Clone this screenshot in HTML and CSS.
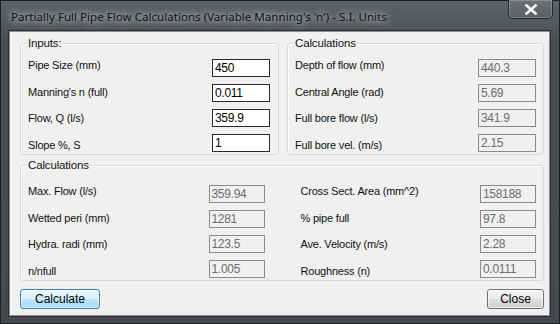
FILE: index.html
```html
<!DOCTYPE html>
<html>
<head>
<meta charset="utf-8">
<link rel="stylesheet" href="styles.css">
</head>
<body>
<div class="window">
  <div class="titlebar">
    <span class="title">Partially Full Pipe Flow Calculations (Variable Manning's 'n') - S.I. Units</span>
    <div class="close-btn">
      <svg width="14" height="11" viewBox="0 0 14 11"><path d="M2.5 1.5 L11.5 9.5 M11.5 1.5 L2.5 9.5" stroke="#ffffff" stroke-width="2.6" stroke-linecap="square"/></svg>
    </div>
  </div>
  <div class="client">
    <div class="top-row">
      <fieldset class="group g-inputs">
        <legend>Inputs:</legend>
        <div class="cols">
          <div class="labels">
            <span>Pipe Size (mm)</span>
            <span>Manning's n (full)</span>
            <span>Flow, Q (l/s)</span>
            <span>Slope %, S</span>
          </div>
          <div class="fields">
            <div class="box edit">450</div>
            <div class="box edit">0.011</div>
            <div class="box edit">359.9</div>
            <div class="box edit">1</div>
          </div>
        </div>
      </fieldset>
      <fieldset class="group g-calc1">
        <legend>Calculations</legend>
        <div class="cols">
          <div class="labels">
            <span>Depth of flow (mm)</span>
            <span>Central Angle (rad)</span>
            <span>Full bore flow (l/s)</span>
            <span>Full bore vel. (m/s)</span>
          </div>
          <div class="fields">
            <div class="box ro">440.3</div>
            <div class="box ro">5.69</div>
            <div class="box ro">341.9</div>
            <div class="box ro">2.15</div>
          </div>
        </div>
      </fieldset>
    </div>
    <fieldset class="group g-calc2">
      <legend>Calculations</legend>
      <div class="cols2">
        <div class="cols half-l">
          <div class="labels">
            <span>Max. Flow (l/s)</span>
            <span>Wetted peri (mm)</span>
            <span>Hydra. radi (mm)</span>
            <span>n/nfull</span>
          </div>
          <div class="fields">
            <div class="box ro narrow">359.94</div>
            <div class="box ro narrow">1281</div>
            <div class="box ro narrow">123.5</div>
            <div class="box ro narrow">1.005</div>
          </div>
        </div>
        <div class="cols half-r">
          <div class="labels">
            <span>Cross Sect. Area (mm^2)</span>
            <span>% pipe full</span>
            <span>Ave. Velocity (m/s)</span>
            <span>Roughness (n)</span>
          </div>
          <div class="fields">
            <div class="box ro narrow">158188</div>
            <div class="box ro narrow">97.8</div>
            <div class="box ro narrow">2.28</div>
            <div class="box ro narrow">0.0111</div>
          </div>
        </div>
      </div>
    </fieldset>
    <div class="buttons">
      <div class="btn default">Calculate</div>
      <div class="btn close">Close</div>
    </div>
  </div>
</div>
</body>
</html>
```

FILE: styles.css
```css
html, body {
  margin: 0;
  padding: 0;
}
body {
  width: 560px;
  height: 324px;
  overflow: hidden;
  background: #3a3e44;
  font-family: "Liberation Sans", Arial, sans-serif;
}
.window {
  width: 560px;
  height: 324px;
  display: flex;
  flex-direction: column;
  box-sizing: border-box;
  border: 1px solid #1c1f24;
  background: linear-gradient(180deg, #5f6369 0px, #565a60 20px, #4b4f55 40px, #45494f 100%);
}
.titlebar {
  height: 30px;
  display: flex;
  align-items: flex-start;
  justify-content: space-between;
  padding-left: 10px;
  padding-right: 6px;
}
.title {
  margin-top: 8px;
  font-family: "Noto Sans", "DejaVu Sans", sans-serif;
  font-size: 11.6px;
  line-height: 15px;
  color: #111;
  text-shadow: 0 0 6px rgba(230, 233, 238, 0.9), 0 0 10px rgba(200, 204, 210, 0.8);
  white-space: nowrap;
}
.close-btn {
  width: 45px;
  height: 19px;
  margin-top: -1px;
  box-sizing: border-box;
  border: 1px solid #25282d;
  border-top: none;
  border-radius: 0 0 5px 5px;
  background: linear-gradient(180deg, #6c7077, #5b5f65);
  box-shadow: inset 0 0 0 1px rgba(255,255,255,0.22);
  display: flex;
  align-items: center;
  justify-content: center;
}
.client {
  margin: 0 9px 7px 8px;
  flex: 1;
  background: #f0f0f0;
  border: 1px solid #8d9196;
  box-shadow: 0 0 0 1px #2a2d33;
  padding: 4px 5px 0 10px;
  box-sizing: border-box;
  font-size: 11px;
  color: #000;
}
.top-row {
  display: flex;
  gap: 8px;
}
.group {
  margin: 0;
  border: 1px solid #d5d8dc;
  border-radius: 3px;
  box-shadow: inset 1px 1px 0 #fff;
  padding: 0;
  min-width: 0;
}
.group legend {
  font-size: 11.5px;
  line-height: 14px;
  padding: 0 1px;
  margin-left: -1px;
  letter-spacing: -0.15px;
  color: #111;
}
.g-inputs {
  width: 259px;
  box-sizing: border-box;
  padding: 9px 8px 2px 7px;
}
.g-calc1 {
  width: 257px;
  box-sizing: border-box;
  padding: 9px 7px 2px 7px;
}
.g-calc2 {
  margin-top: 3px;
  width: 524px;
  box-sizing: border-box;
  padding: 13px 7px 2px 7px;
}
.cols {
  display: flex;
  justify-content: space-between;
  align-items: flex-start;
}
.cols2 {
  display: flex;
  gap: 36px;
}
.half-l { width: 237px; }
.half-r { width: 236px; }
.labels {
  display: flex;
  flex-direction: column;
  gap: 12.5px;
  margin-top: -1px;
  font-size: 11px;
  line-height: 14px;
  letter-spacing: -0.2px;
  white-space: nowrap;
  color: #111;
}
.fields {
  display: flex;
  flex-direction: column;
  gap: 7px;
}
.box {
  width: 58px;
  height: 18px;
  box-sizing: border-box;
  padding: 1px 2px 0 2px;
  font-size: 12px;
  line-height: 15px;
  letter-spacing: -0.3px;
}
.box.narrow { width: 56px; }
.edit {
  background: #fff;
  border: 1px solid #2a2a2a;
  color: #000;
}
.ro {
  background: #f0f0f0;
  border: 1px solid #8a8a8a;
  color: #6d6d6d;
}
.buttons {
  display: flex;
  justify-content: space-between;
  margin-top: 8px;
  width: 524px;
}
.btn {
  height: 20px;
  box-sizing: border-box;
  border: 1px solid #707070;
  border-radius: 3px;
  background: linear-gradient(180deg, #f2f2f2 0%, #ebebeb 48%, #dddddd 52%, #cfcfcf 100%);
  box-shadow: inset 0 0 0 1px rgba(255,255,255,0.7);
  font-size: 12px;
  line-height: 18px;
  text-align: center;
  color: #000;
}
.btn.default {
  width: 80px;
  border-color: #3c7fb1;
  background: linear-gradient(180deg, #eaf6fd 0%, #d9f0fc 48%, #bee6fd 52%, #a7d9f5 100%);
  box-shadow: inset 0 0 0 1px rgba(255,255,255,0.6);
}
.btn.close {
  width: 57px;
}
```
